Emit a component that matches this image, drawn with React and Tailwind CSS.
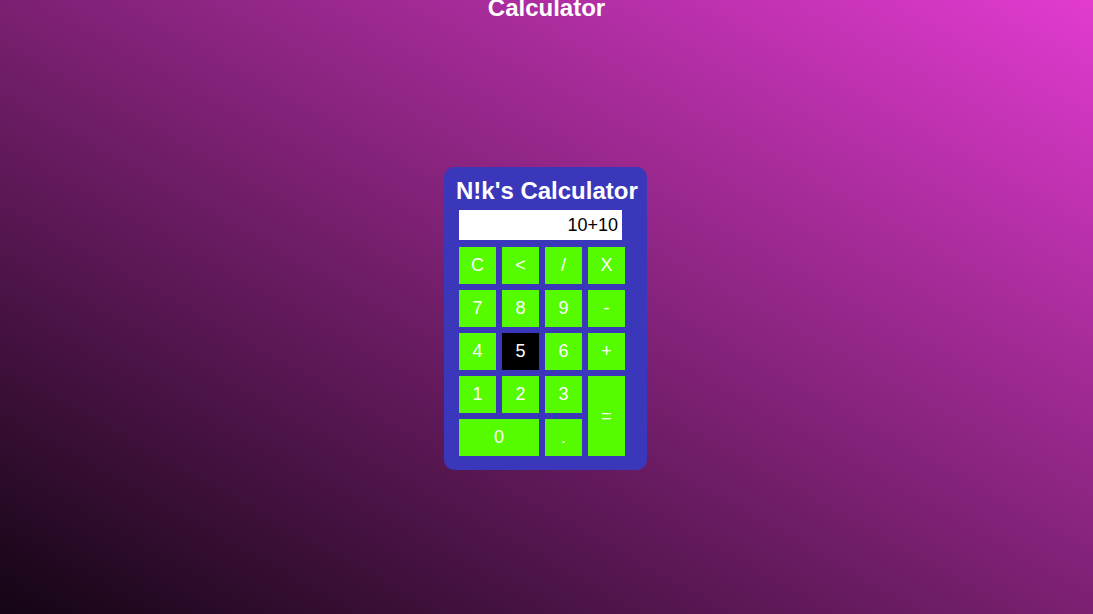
import React from "react";

const keys = [
  { l: "C" }, { l: "<" }, { l: "/" }, { l: "X" },
  { l: "7" }, { l: "8" }, { l: "9" }, { l: "-" },
  { l: "4" }, { l: "5", dark: true }, { l: "6" }, { l: "+" },
  { l: "1" }, { l: "2" }, { l: "3" }, { l: "=", tall: true },
  { l: "0", wide: true }, { l: "." },
];

export default function App() {
  return (
    <div
      className="w-full h-[614px] overflow-hidden flex flex-col items-center bg-linear-to-tr/srgb from-[#140514] to-[#e23bd0]"
      style={{ fontFamily: '"Liberation Sans", Arial, sans-serif' }}
    >
      <h1 className="-mt-[6px] text-[24px] leading-[27px] font-bold text-white">Calculator</h1>
      <div className="mt-[146px] mr-[2px] w-[203px] rounded-[10px] bg-[#3a37bb] px-[10px] pt-[10px] pb-[14px]">
        <div className="pl-[2px] text-center text-[24px] leading-[27px] font-bold text-white whitespace-nowrap">
          N!k's Calculator
        </div>
        <div className="ml-[5px] mt-[6px] h-[30px] w-[163px] bg-white text-right pr-[4px] text-[18px] leading-[30px] text-black">
          10+10
        </div>
        <div className="ml-[5px] mt-[7px] grid grid-cols-[repeat(4,37px)] auto-rows-[37px] gap-[6px]">
          {keys.map((k) => (
            <div
              key={k.l}
              className={
                "flex items-center justify-center text-[18px] text-white " +
                (k.dark ? "bg-black " : "bg-[#55fc00] ") +
                (k.wide ? "col-span-2 " : "") +
                (k.tall ? "row-span-2 " : "")
              }
            >
              {k.l}
            </div>
          ))}
        </div>
      </div>
    </div>
  );
}
